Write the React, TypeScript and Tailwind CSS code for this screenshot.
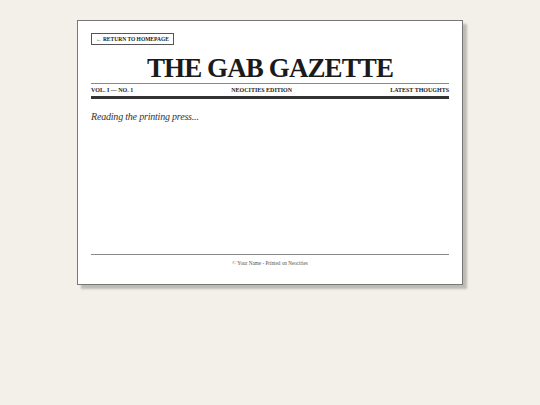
export default function App() {
  return (
    <div className="min-h-screen bg-[#f3f0e9] pt-[20px] font-['Liberation_Serif','Times_New_Roman',serif] text-[#222]">
      <div className="mx-auto w-[386px] border border-[#777] bg-white px-[13px] pb-[17px] pt-[12px] shadow-[4px_4px_2px_rgba(0,0,0,0.22)]">
        {/* Header */}
        <div className="flex leading-none">
          <a
            href="#"
            className="block border border-[#555] px-[4px] py-[2px] text-[5.5px] font-bold uppercase leading-[6px] text-[#222]"
          >
            ← Return to homepage
          </a>
        </div>

        <h1 className="mt-[10px] text-center text-[27px] font-bold leading-none tracking-[-0.9px] text-[#1a1a1a]">
          THE GAB GAZETTE
        </h1>

        <div className="mt-[1px] flex items-center justify-between border-t border-b-[3px] border-t-[#888] border-b-[#333] pb-[2px] pt-[3px] text-[6px] font-bold uppercase leading-[7px]">
          <span>Vol. I — No. 1</span>
          <span>Neocities Edition</span>
          <span>Latest Thoughts</span>
        </div>

        {/* Content */}
        <main className="h-[155px] pt-[12px]">
          <p className="text-[10px] italic leading-[12px] tracking-[-0.2px] text-[#333]">Reading the printing press...</p>
        </main>

        {/* Footer */}
        <footer className="border-t border-[#888] pt-[5px] text-center text-[5.2px] leading-[7px] text-[#555]">
          © Your Name - Printed on Neocities
        </footer>
      </div>
    </div>
  );
}
